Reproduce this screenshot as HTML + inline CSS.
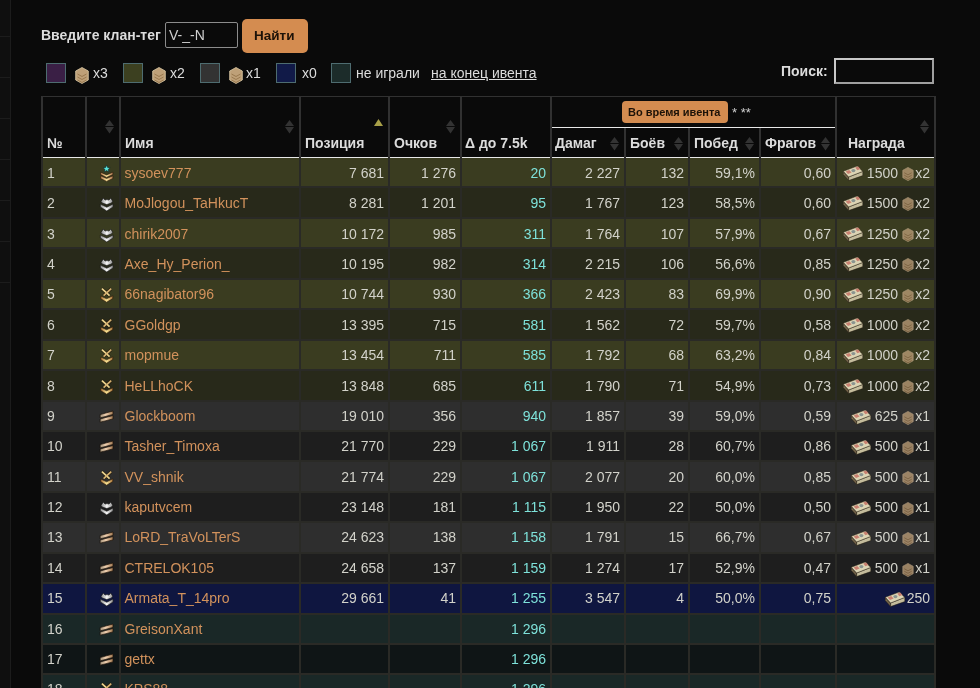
<!DOCTYPE html>
<html><head><meta charset="utf-8"><style>
html,body{margin:0;padding:0;}
body{width:980px;height:688px;overflow:hidden;will-change:transform;background:#0a0a0a;position:relative;font-family:"Liberation Sans",sans-serif;font-size:14px;color:#dcdcdc;}
.a{position:absolute;}
.t{position:absolute;white-space:nowrap;line-height:16px;height:16px;}
.r{text-align:right;}
.b{font-weight:bold;}
.ri{position:absolute;}
.sort{position:absolute;width:9px;height:14px;}
</style></head><body>

<div class="a" style="left:0;top:0;width:10px;height:688px;background:#0f0f0f;border-right:1px solid #1c1c1c"></div>
<div class="a" style="left:0;top:36px;width:10px;height:1px;background:#1c1c1c"></div>
<div class="a" style="left:0;top:77px;width:10px;height:1px;background:#1c1c1c"></div>
<div class="a" style="left:0;top:118px;width:10px;height:1px;background:#1c1c1c"></div>
<div class="a" style="left:0;top:159px;width:10px;height:1px;background:#1c1c1c"></div>
<div class="a" style="left:0;top:200px;width:10px;height:1px;background:#1c1c1c"></div>
<div class="a" style="left:0;top:241px;width:10px;height:1px;background:#1c1c1c"></div>
<div class="a" style="left:0;top:282px;width:10px;height:1px;background:#1c1c1c"></div>
<div class="t b" style="left:41px;top:27px;">Введите клан-тег</div>
<div class="a" style="left:165px;top:22px;width:71px;height:24px;border:1px solid #8c8c8c;border-radius:2px"></div>
<div class="t " style="left:169px;top:27px;color:#cfcfcf">V-_-N</div>
<div class="a" style="left:242px;top:19px;width:66px;height:34px;background:#d48c50;border-radius:5px"></div>
<div class="t b" style="left:254px;top:28px;font-size:13.5px;color:#1c1208">Найти</div>
<div class="a" style="left:46px;top:63px;width:18px;height:18px;background:#3a1f45;border:1px solid #4e6c70"></div>
<div class="a" style="left:123px;top:63px;width:18px;height:18px;background:#3c4020;border:1px solid #4e6c70"></div>
<div class="a" style="left:200px;top:63px;width:18px;height:18px;background:#333333;border:1px solid #4e6c70"></div>
<div class="a" style="left:276px;top:63px;width:18px;height:18px;background:#111a48;border:1px solid #4e6c70"></div>
<div class="a" style="left:331px;top:63px;width:18px;height:18px;background:#1c2c2a;border:1px solid #4e6c70"></div>
<div class="a" style="left:75px;top:67px;width:14px;height:17px"><svg width="14" height="17" viewBox="0 0 14 17"><path d="M7 0.5l6.3 3.5v9l-6.3 3.5-6.3-3.5v-9z" fill="#bea078" stroke="#dccaa6" stroke-width="0.8"/><path d="M2.5 7l4.5 2.5 4.5-2.5M2.5 10l4.5 2.5 4.5-2.5M2.5 13l4.5 2.5 4.5-2.5" fill="none" stroke="#98784e" stroke-width="1"/></svg></div>
<div class="a" style="left:152px;top:67px;width:14px;height:17px"><svg width="14" height="17" viewBox="0 0 14 17"><path d="M7 0.5l6.3 3.5v9l-6.3 3.5-6.3-3.5v-9z" fill="#bea078" stroke="#dccaa6" stroke-width="0.8"/><path d="M2.5 7l4.5 2.5 4.5-2.5M2.5 10l4.5 2.5 4.5-2.5M2.5 13l4.5 2.5 4.5-2.5" fill="none" stroke="#98784e" stroke-width="1"/></svg></div>
<div class="a" style="left:229px;top:67px;width:14px;height:17px"><svg width="14" height="17" viewBox="0 0 14 17"><path d="M7 0.5l6.3 3.5v9l-6.3 3.5-6.3-3.5v-9z" fill="#bea078" stroke="#dccaa6" stroke-width="0.8"/><path d="M2.5 7l4.5 2.5 4.5-2.5M2.5 10l4.5 2.5 4.5-2.5M2.5 13l4.5 2.5 4.5-2.5" fill="none" stroke="#98784e" stroke-width="1"/></svg></div>
<div class="t " style="left:93px;top:65px;">x3</div>
<div class="t " style="left:170px;top:65px;">x2</div>
<div class="t " style="left:246px;top:65px;">x1</div>
<div class="t " style="left:302px;top:65px;">x0</div>
<div class="t " style="left:356px;top:65px;">не играли</div>
<div class="t " style="left:431px;top:65px;text-decoration:underline">на конец ивента</div>
<div class="t b" style="left:781px;top:63px;">Поиск:</div>
<div class="a" style="left:834px;top:58px;width:96px;height:22px;border:2px solid #c8c8c8;border-right-color:#a0a0a0;border-bottom-color:#a0a0a0"></div>
<div class="a" style="left:41px;top:96px;width:895px;height:1px;background:#313131"></div>
<div class="a" style="left:552px;top:127px;width:283px;height:1px;background:#e8e8e8"></div>
<div class="a" style="left:43px;top:157px;width:891px;height:1px;background:#e8e8e8"></div>
<div class="a" style="left:41px;top:158px;width:895px;height:28px;background:#3a3c20"></div>
<div class="a" style="left:41px;top:186px;width:895px;height:2px;background:#2a2a26"></div>
<div class="t " style="left:47px;top:165px;color:#d2d2ca">1</div>
<div class="a" style="left:99px;top:158px;width:16px;height:28px"><svg width="16" height="28" viewBox="0 0 16 28"><defs><linearGradient id="gg" x1="0" x2="1"><stop offset="0" stop-color="#b07850"/><stop offset="0.5" stop-color="#f8e098"/><stop offset="1" stop-color="#b07850"/></linearGradient></defs><path d="M1.6,14.2 L7.6,16.9 L13.9,14.2 L13.9,16.6 L7.6,19.4 L1.6,16.6Z" fill="url(#gg)" stroke="#2a1a08" stroke-width="0.6"/><path d="M1.6,17.8 L7.6,20.5 L13.9,17.8 L13.9,20.5 L7.6,23.4 L1.6,20.5Z" fill="url(#gg)" stroke="#2a1a08" stroke-width="0.6"/><path d="M7.6,7.1 L8.7,9.5 L11.2,9.7 L9.3,11.4 L9.9,13.9 L7.6,12.6 L5.3,13.9 L5.9,11.4 L4,9.7 L6.5,9.5Z" fill="#58e0d8" stroke="#0c2020" stroke-width="0.6"/></svg></div>
<div class="t " style="left:124.5px;top:165px;color:#d2925c">sysoev777</div>
<div class="t r " style="right:596px;top:165px;color:#d2d2ca">7 681</div>
<div class="t r " style="right:524px;top:165px;color:#d2d2ca">1 276</div>
<div class="t r " style="right:434px;top:165px;color:#7ee2da">20</div>
<div class="t r " style="right:360px;top:165px;color:#d2d2ca">2 227</div>
<div class="t r " style="right:296px;top:165px;color:#d2d2ca">132</div>
<div class="t r " style="right:225px;top:165px;color:#d2d2ca">59,1%</div>
<div class="t r " style="right:149px;top:165px;color:#d2d2ca">0,60</div>
<div class="t r " style="right:50px;top:165px;color:#d2d2ca">x2</div>
<div class="a" style="left:902px;top:167px;width:12px;height:14px;opacity:0.8"><svg width="12" height="14" viewBox="0 0 14 17"><path d="M7 0.5l6.3 3.5v9l-6.3 3.5-6.3-3.5v-9z" fill="#b89a74" stroke="#c8b090" stroke-width="0.8"/><path d="M2.5 7l4.5 2.5 4.5-2.5M2.5 10l4.5 2.5 4.5-2.5M2.5 13l4.5 2.5 4.5-2.5" fill="none" stroke="#8c6c48" stroke-width="1"/></svg></div>
<div class="t r " style="right:82px;top:165px;color:#d2d2ca">1500</div>
<div class="a" style="left:843px;top:158px;width:21px;height:28px"><svg width="21" height="28" viewBox="0 0 21 28"><path d="M0.3,13.3 L5.6,19 L5.6,22.6 L0.3,16.6Z" fill="#8a7c60" stroke="#201a10" stroke-width="0.5"/><path d="M5.6,19 L19.8,13.4 L19.8,17.6 L5.6,22.6Z" fill="#c4bc9c" stroke="#201a10" stroke-width="0.5"/><path d="M0.3,13.3 L14.2,8 L19.8,13.4 L5.6,19Z" fill="#dcd4b4" stroke="#302818" stroke-width="0.5"/><path d="M1.2,15.2 L5.8,20.2 M1.2,16.6 L5.8,21.6" stroke="#40301c" stroke-width="0.5"/><path d="M2.6,13.4 L6.2,12 L8.6,14.6 L5,16.1Z" fill="#c88070"/><path d="M12.2,9.6 L15.2,8.5 L17.4,11 L14.4,12.2Z" fill="#c88070"/><ellipse cx="10.4" cy="12.6" rx="2" ry="1.6" fill="#8a9490"/></svg></div>
<div class="a" style="left:41px;top:188px;width:895px;height:29px;background:#28291a"></div>
<div class="a" style="left:41px;top:217px;width:895px;height:2px;background:#2a2a26"></div>
<div class="t " style="left:47px;top:195px;color:#d2d2ca">2</div>
<div class="a" style="left:99px;top:188px;width:16px;height:28px"><svg width="16" height="28" viewBox="0 -0.7 16 28"><defs><linearGradient id="sg" x1="0" x2="1"><stop offset="0" stop-color="#8c8c8c"/><stop offset="0.5" stop-color="#f8f8f8"/><stop offset="1" stop-color="#8c8c8c"/></linearGradient></defs><path d="M4.3,9.3 L6,11.4 L8,10.9 L10,11.4 L11.7,9.3 L13.8,12.5 L12.5,14.3 L7.8,15.8 L3.2,14.3 L2,12.7Z" fill="url(#sg)" stroke="#101010" stroke-width="0.6"/><path d="M1.3,15.4 L7.8,18.6 L14.1,15.2 L14.1,18.2 L7.8,22.3 L1.3,18.2Z" fill="url(#sg)" stroke="#101010" stroke-width="0.6"/></svg></div>
<div class="t " style="left:124.5px;top:195px;color:#d2925c">MoJlogou_TaHkucT</div>
<div class="t r " style="right:596px;top:195px;color:#d2d2ca">8 281</div>
<div class="t r " style="right:524px;top:195px;color:#d2d2ca">1 201</div>
<div class="t r " style="right:434px;top:195px;color:#7ee2da">95</div>
<div class="t r " style="right:360px;top:195px;color:#d2d2ca">1 767</div>
<div class="t r " style="right:296px;top:195px;color:#d2d2ca">123</div>
<div class="t r " style="right:225px;top:195px;color:#d2d2ca">58,5%</div>
<div class="t r " style="right:149px;top:195px;color:#d2d2ca">0,60</div>
<div class="t r " style="right:50px;top:195px;color:#d2d2ca">x2</div>
<div class="a" style="left:902px;top:197px;width:12px;height:14px;opacity:0.8"><svg width="12" height="14" viewBox="0 0 14 17"><path d="M7 0.5l6.3 3.5v9l-6.3 3.5-6.3-3.5v-9z" fill="#b89a74" stroke="#c8b090" stroke-width="0.8"/><path d="M2.5 7l4.5 2.5 4.5-2.5M2.5 10l4.5 2.5 4.5-2.5M2.5 13l4.5 2.5 4.5-2.5" fill="none" stroke="#8c6c48" stroke-width="1"/></svg></div>
<div class="t r " style="right:82px;top:195px;color:#d2d2ca">1500</div>
<div class="a" style="left:843px;top:188px;width:21px;height:28px"><svg width="21" height="28" viewBox="0 0 21 28"><path d="M0.3,13.3 L5.6,19 L5.6,22.6 L0.3,16.6Z" fill="#8a7c60" stroke="#201a10" stroke-width="0.5"/><path d="M5.6,19 L19.8,13.4 L19.8,17.6 L5.6,22.6Z" fill="#c4bc9c" stroke="#201a10" stroke-width="0.5"/><path d="M0.3,13.3 L14.2,8 L19.8,13.4 L5.6,19Z" fill="#dcd4b4" stroke="#302818" stroke-width="0.5"/><path d="M1.2,15.2 L5.8,20.2 M1.2,16.6 L5.8,21.6" stroke="#40301c" stroke-width="0.5"/><path d="M2.6,13.4 L6.2,12 L8.6,14.6 L5,16.1Z" fill="#c88070"/><path d="M12.2,9.6 L15.2,8.5 L17.4,11 L14.4,12.2Z" fill="#c88070"/><ellipse cx="10.4" cy="12.6" rx="2" ry="1.6" fill="#8a9490"/></svg></div>
<div class="a" style="left:41px;top:219px;width:895px;height:28px;background:#3a3c20"></div>
<div class="a" style="left:41px;top:247px;width:895px;height:2px;background:#2a2a26"></div>
<div class="t " style="left:47px;top:226px;color:#d2d2ca">3</div>
<div class="a" style="left:99px;top:219px;width:16px;height:28px"><svg width="16" height="28" viewBox="0 -0.7 16 28"><defs><linearGradient id="sg" x1="0" x2="1"><stop offset="0" stop-color="#8c8c8c"/><stop offset="0.5" stop-color="#f8f8f8"/><stop offset="1" stop-color="#8c8c8c"/></linearGradient></defs><path d="M4.3,9.3 L6,11.4 L8,10.9 L10,11.4 L11.7,9.3 L13.8,12.5 L12.5,14.3 L7.8,15.8 L3.2,14.3 L2,12.7Z" fill="url(#sg)" stroke="#101010" stroke-width="0.6"/><path d="M1.3,15.4 L7.8,18.6 L14.1,15.2 L14.1,18.2 L7.8,22.3 L1.3,18.2Z" fill="url(#sg)" stroke="#101010" stroke-width="0.6"/></svg></div>
<div class="t " style="left:124.5px;top:226px;color:#d2925c">chirik2007</div>
<div class="t r " style="right:596px;top:226px;color:#d2d2ca">10 172</div>
<div class="t r " style="right:524px;top:226px;color:#d2d2ca">985</div>
<div class="t r " style="right:434px;top:226px;color:#7ee2da">311</div>
<div class="t r " style="right:360px;top:226px;color:#d2d2ca">1 764</div>
<div class="t r " style="right:296px;top:226px;color:#d2d2ca">107</div>
<div class="t r " style="right:225px;top:226px;color:#d2d2ca">57,9%</div>
<div class="t r " style="right:149px;top:226px;color:#d2d2ca">0,67</div>
<div class="t r " style="right:50px;top:226px;color:#d2d2ca">x2</div>
<div class="a" style="left:902px;top:228px;width:12px;height:14px;opacity:0.8"><svg width="12" height="14" viewBox="0 0 14 17"><path d="M7 0.5l6.3 3.5v9l-6.3 3.5-6.3-3.5v-9z" fill="#b89a74" stroke="#c8b090" stroke-width="0.8"/><path d="M2.5 7l4.5 2.5 4.5-2.5M2.5 10l4.5 2.5 4.5-2.5M2.5 13l4.5 2.5 4.5-2.5" fill="none" stroke="#8c6c48" stroke-width="1"/></svg></div>
<div class="t r " style="right:82px;top:226px;color:#d2d2ca">1250</div>
<div class="a" style="left:843px;top:219px;width:21px;height:28px"><svg width="21" height="28" viewBox="0 0 21 28"><path d="M0.3,13.3 L5.6,19 L5.6,22.6 L0.3,16.6Z" fill="#8a7c60" stroke="#201a10" stroke-width="0.5"/><path d="M5.6,19 L19.8,13.4 L19.8,17.6 L5.6,22.6Z" fill="#c4bc9c" stroke="#201a10" stroke-width="0.5"/><path d="M0.3,13.3 L14.2,8 L19.8,13.4 L5.6,19Z" fill="#dcd4b4" stroke="#302818" stroke-width="0.5"/><path d="M1.2,15.2 L5.8,20.2 M1.2,16.6 L5.8,21.6" stroke="#40301c" stroke-width="0.5"/><path d="M2.6,13.4 L6.2,12 L8.6,14.6 L5,16.1Z" fill="#c88070"/><path d="M12.2,9.6 L15.2,8.5 L17.4,11 L14.4,12.2Z" fill="#c88070"/><ellipse cx="10.4" cy="12.6" rx="2" ry="1.6" fill="#8a9490"/></svg></div>
<div class="a" style="left:41px;top:249px;width:895px;height:29px;background:#28291a"></div>
<div class="a" style="left:41px;top:278px;width:895px;height:2px;background:#2a2a26"></div>
<div class="t " style="left:47px;top:256px;color:#d2d2ca">4</div>
<div class="a" style="left:99px;top:249px;width:16px;height:28px"><svg width="16" height="28" viewBox="0 -0.7 16 28"><defs><linearGradient id="sg" x1="0" x2="1"><stop offset="0" stop-color="#8c8c8c"/><stop offset="0.5" stop-color="#f8f8f8"/><stop offset="1" stop-color="#8c8c8c"/></linearGradient></defs><path d="M4.3,9.3 L6,11.4 L8,10.9 L10,11.4 L11.7,9.3 L13.8,12.5 L12.5,14.3 L7.8,15.8 L3.2,14.3 L2,12.7Z" fill="url(#sg)" stroke="#101010" stroke-width="0.6"/><path d="M1.3,15.4 L7.8,18.6 L14.1,15.2 L14.1,18.2 L7.8,22.3 L1.3,18.2Z" fill="url(#sg)" stroke="#101010" stroke-width="0.6"/></svg></div>
<div class="t " style="left:124.5px;top:256px;color:#d2925c">Axe_Hy_Perion_</div>
<div class="t r " style="right:596px;top:256px;color:#d2d2ca">10 195</div>
<div class="t r " style="right:524px;top:256px;color:#d2d2ca">982</div>
<div class="t r " style="right:434px;top:256px;color:#7ee2da">314</div>
<div class="t r " style="right:360px;top:256px;color:#d2d2ca">2 215</div>
<div class="t r " style="right:296px;top:256px;color:#d2d2ca">106</div>
<div class="t r " style="right:225px;top:256px;color:#d2d2ca">56,6%</div>
<div class="t r " style="right:149px;top:256px;color:#d2d2ca">0,85</div>
<div class="t r " style="right:50px;top:256px;color:#d2d2ca">x2</div>
<div class="a" style="left:902px;top:258px;width:12px;height:14px;opacity:0.8"><svg width="12" height="14" viewBox="0 0 14 17"><path d="M7 0.5l6.3 3.5v9l-6.3 3.5-6.3-3.5v-9z" fill="#b89a74" stroke="#c8b090" stroke-width="0.8"/><path d="M2.5 7l4.5 2.5 4.5-2.5M2.5 10l4.5 2.5 4.5-2.5M2.5 13l4.5 2.5 4.5-2.5" fill="none" stroke="#8c6c48" stroke-width="1"/></svg></div>
<div class="t r " style="right:82px;top:256px;color:#d2d2ca">1250</div>
<div class="a" style="left:843px;top:249px;width:21px;height:28px"><svg width="21" height="28" viewBox="0 0 21 28"><path d="M0.3,13.3 L5.6,19 L5.6,22.6 L0.3,16.6Z" fill="#8a7c60" stroke="#201a10" stroke-width="0.5"/><path d="M5.6,19 L19.8,13.4 L19.8,17.6 L5.6,22.6Z" fill="#c4bc9c" stroke="#201a10" stroke-width="0.5"/><path d="M0.3,13.3 L14.2,8 L19.8,13.4 L5.6,19Z" fill="#dcd4b4" stroke="#302818" stroke-width="0.5"/><path d="M1.2,15.2 L5.8,20.2 M1.2,16.6 L5.8,21.6" stroke="#40301c" stroke-width="0.5"/><path d="M2.6,13.4 L6.2,12 L8.6,14.6 L5,16.1Z" fill="#c88070"/><path d="M12.2,9.6 L15.2,8.5 L17.4,11 L14.4,12.2Z" fill="#c88070"/><ellipse cx="10.4" cy="12.6" rx="2" ry="1.6" fill="#8a9490"/></svg></div>
<div class="a" style="left:41px;top:280px;width:895px;height:28px;background:#3a3c20"></div>
<div class="a" style="left:41px;top:308px;width:895px;height:2px;background:#2a2a26"></div>
<div class="t " style="left:47px;top:286px;color:#d2d2ca">5</div>
<div class="a" style="left:99px;top:279px;width:16px;height:28px"><svg width="16" height="28" viewBox="0 -1 16 28"><defs><linearGradient id="og" x1="0" x2="1"><stop offset="0" stop-color="#a87038"/><stop offset="0.5" stop-color="#fae494"/><stop offset="1" stop-color="#a87038"/></linearGradient></defs><path d="M2.9,8.6 L10.6,15.6 M12.2,8.6 L4.6,15.6" stroke="#20180a" stroke-width="3"/><path d="M2.9,8.6 L10.6,15.6" stroke="#ecd48e" stroke-width="1.8"/><path d="M12.2,8.6 L4.6,15.6" stroke="#d4b070" stroke-width="1.8"/><path d="M1.8,16 L7.6,18.8 L13.8,15.8 L13.8,18.6 L7.6,22.2 L1.8,18.8Z" fill="url(#og)" stroke="#2a1a08" stroke-width="0.6"/></svg></div>
<div class="t " style="left:124.5px;top:286px;color:#d2925c">66nagibator96</div>
<div class="t r " style="right:596px;top:286px;color:#d2d2ca">10 744</div>
<div class="t r " style="right:524px;top:286px;color:#d2d2ca">930</div>
<div class="t r " style="right:434px;top:286px;color:#7ee2da">366</div>
<div class="t r " style="right:360px;top:286px;color:#d2d2ca">2 423</div>
<div class="t r " style="right:296px;top:286px;color:#d2d2ca">83</div>
<div class="t r " style="right:225px;top:286px;color:#d2d2ca">69,9%</div>
<div class="t r " style="right:149px;top:286px;color:#d2d2ca">0,90</div>
<div class="t r " style="right:50px;top:286px;color:#d2d2ca">x2</div>
<div class="a" style="left:902px;top:289px;width:12px;height:14px;opacity:0.8"><svg width="12" height="14" viewBox="0 0 14 17"><path d="M7 0.5l6.3 3.5v9l-6.3 3.5-6.3-3.5v-9z" fill="#b89a74" stroke="#c8b090" stroke-width="0.8"/><path d="M2.5 7l4.5 2.5 4.5-2.5M2.5 10l4.5 2.5 4.5-2.5M2.5 13l4.5 2.5 4.5-2.5" fill="none" stroke="#8c6c48" stroke-width="1"/></svg></div>
<div class="t r " style="right:82px;top:286px;color:#d2d2ca">1250</div>
<div class="a" style="left:843px;top:280px;width:21px;height:28px"><svg width="21" height="28" viewBox="0 0 21 28"><path d="M0.3,13.3 L5.6,19 L5.6,22.6 L0.3,16.6Z" fill="#8a7c60" stroke="#201a10" stroke-width="0.5"/><path d="M5.6,19 L19.8,13.4 L19.8,17.6 L5.6,22.6Z" fill="#c4bc9c" stroke="#201a10" stroke-width="0.5"/><path d="M0.3,13.3 L14.2,8 L19.8,13.4 L5.6,19Z" fill="#dcd4b4" stroke="#302818" stroke-width="0.5"/><path d="M1.2,15.2 L5.8,20.2 M1.2,16.6 L5.8,21.6" stroke="#40301c" stroke-width="0.5"/><path d="M2.6,13.4 L6.2,12 L8.6,14.6 L5,16.1Z" fill="#c88070"/><path d="M12.2,9.6 L15.2,8.5 L17.4,11 L14.4,12.2Z" fill="#c88070"/><ellipse cx="10.4" cy="12.6" rx="2" ry="1.6" fill="#8a9490"/></svg></div>
<div class="a" style="left:41px;top:310px;width:895px;height:29px;background:#28291a"></div>
<div class="a" style="left:41px;top:339px;width:895px;height:2px;background:#2a2a26"></div>
<div class="t " style="left:47px;top:317px;color:#d2d2ca">6</div>
<div class="a" style="left:99px;top:310px;width:16px;height:28px"><svg width="16" height="28" viewBox="0 -1 16 28"><defs><linearGradient id="og" x1="0" x2="1"><stop offset="0" stop-color="#a87038"/><stop offset="0.5" stop-color="#fae494"/><stop offset="1" stop-color="#a87038"/></linearGradient></defs><path d="M2.9,8.6 L10.6,15.6 M12.2,8.6 L4.6,15.6" stroke="#20180a" stroke-width="3"/><path d="M2.9,8.6 L10.6,15.6" stroke="#ecd48e" stroke-width="1.8"/><path d="M12.2,8.6 L4.6,15.6" stroke="#d4b070" stroke-width="1.8"/><path d="M1.8,16 L7.6,18.8 L13.8,15.8 L13.8,18.6 L7.6,22.2 L1.8,18.8Z" fill="url(#og)" stroke="#2a1a08" stroke-width="0.6"/></svg></div>
<div class="t " style="left:124.5px;top:317px;color:#d2925c">GGoldgp</div>
<div class="t r " style="right:596px;top:317px;color:#d2d2ca">13 395</div>
<div class="t r " style="right:524px;top:317px;color:#d2d2ca">715</div>
<div class="t r " style="right:434px;top:317px;color:#7ee2da">581</div>
<div class="t r " style="right:360px;top:317px;color:#d2d2ca">1 562</div>
<div class="t r " style="right:296px;top:317px;color:#d2d2ca">72</div>
<div class="t r " style="right:225px;top:317px;color:#d2d2ca">59,7%</div>
<div class="t r " style="right:149px;top:317px;color:#d2d2ca">0,58</div>
<div class="t r " style="right:50px;top:317px;color:#d2d2ca">x2</div>
<div class="a" style="left:902px;top:319px;width:12px;height:14px;opacity:0.8"><svg width="12" height="14" viewBox="0 0 14 17"><path d="M7 0.5l6.3 3.5v9l-6.3 3.5-6.3-3.5v-9z" fill="#b89a74" stroke="#c8b090" stroke-width="0.8"/><path d="M2.5 7l4.5 2.5 4.5-2.5M2.5 10l4.5 2.5 4.5-2.5M2.5 13l4.5 2.5 4.5-2.5" fill="none" stroke="#8c6c48" stroke-width="1"/></svg></div>
<div class="t r " style="right:82px;top:317px;color:#d2d2ca">1000</div>
<div class="a" style="left:843px;top:310px;width:21px;height:28px"><svg width="21" height="28" viewBox="0 0 21 28"><path d="M0.3,13.3 L5.6,19 L5.6,22.6 L0.3,16.6Z" fill="#8a7c60" stroke="#201a10" stroke-width="0.5"/><path d="M5.6,19 L19.8,13.4 L19.8,17.6 L5.6,22.6Z" fill="#c4bc9c" stroke="#201a10" stroke-width="0.5"/><path d="M0.3,13.3 L14.2,8 L19.8,13.4 L5.6,19Z" fill="#dcd4b4" stroke="#302818" stroke-width="0.5"/><path d="M1.2,15.2 L5.8,20.2 M1.2,16.6 L5.8,21.6" stroke="#40301c" stroke-width="0.5"/><path d="M2.6,13.4 L6.2,12 L8.6,14.6 L5,16.1Z" fill="#c88070"/><path d="M12.2,9.6 L15.2,8.5 L17.4,11 L14.4,12.2Z" fill="#c88070"/><ellipse cx="10.4" cy="12.6" rx="2" ry="1.6" fill="#8a9490"/></svg></div>
<div class="a" style="left:41px;top:341px;width:895px;height:28px;background:#3a3c20"></div>
<div class="a" style="left:41px;top:369px;width:895px;height:2px;background:#2a2a26"></div>
<div class="t " style="left:47px;top:347px;color:#d2d2ca">7</div>
<div class="a" style="left:99px;top:340px;width:16px;height:28px"><svg width="16" height="28" viewBox="0 -1 16 28"><defs><linearGradient id="og" x1="0" x2="1"><stop offset="0" stop-color="#a87038"/><stop offset="0.5" stop-color="#fae494"/><stop offset="1" stop-color="#a87038"/></linearGradient></defs><path d="M2.9,8.6 L10.6,15.6 M12.2,8.6 L4.6,15.6" stroke="#20180a" stroke-width="3"/><path d="M2.9,8.6 L10.6,15.6" stroke="#ecd48e" stroke-width="1.8"/><path d="M12.2,8.6 L4.6,15.6" stroke="#d4b070" stroke-width="1.8"/><path d="M1.8,16 L7.6,18.8 L13.8,15.8 L13.8,18.6 L7.6,22.2 L1.8,18.8Z" fill="url(#og)" stroke="#2a1a08" stroke-width="0.6"/></svg></div>
<div class="t " style="left:124.5px;top:347px;color:#d2925c">mopmue</div>
<div class="t r " style="right:596px;top:347px;color:#d2d2ca">13 454</div>
<div class="t r " style="right:524px;top:347px;color:#d2d2ca">711</div>
<div class="t r " style="right:434px;top:347px;color:#7ee2da">585</div>
<div class="t r " style="right:360px;top:347px;color:#d2d2ca">1 792</div>
<div class="t r " style="right:296px;top:347px;color:#d2d2ca">68</div>
<div class="t r " style="right:225px;top:347px;color:#d2d2ca">63,2%</div>
<div class="t r " style="right:149px;top:347px;color:#d2d2ca">0,84</div>
<div class="t r " style="right:50px;top:347px;color:#d2d2ca">x2</div>
<div class="a" style="left:902px;top:350px;width:12px;height:14px;opacity:0.8"><svg width="12" height="14" viewBox="0 0 14 17"><path d="M7 0.5l6.3 3.5v9l-6.3 3.5-6.3-3.5v-9z" fill="#b89a74" stroke="#c8b090" stroke-width="0.8"/><path d="M2.5 7l4.5 2.5 4.5-2.5M2.5 10l4.5 2.5 4.5-2.5M2.5 13l4.5 2.5 4.5-2.5" fill="none" stroke="#8c6c48" stroke-width="1"/></svg></div>
<div class="t r " style="right:82px;top:347px;color:#d2d2ca">1000</div>
<div class="a" style="left:843px;top:341px;width:21px;height:28px"><svg width="21" height="28" viewBox="0 0 21 28"><path d="M0.3,13.3 L5.6,19 L5.6,22.6 L0.3,16.6Z" fill="#8a7c60" stroke="#201a10" stroke-width="0.5"/><path d="M5.6,19 L19.8,13.4 L19.8,17.6 L5.6,22.6Z" fill="#c4bc9c" stroke="#201a10" stroke-width="0.5"/><path d="M0.3,13.3 L14.2,8 L19.8,13.4 L5.6,19Z" fill="#dcd4b4" stroke="#302818" stroke-width="0.5"/><path d="M1.2,15.2 L5.8,20.2 M1.2,16.6 L5.8,21.6" stroke="#40301c" stroke-width="0.5"/><path d="M2.6,13.4 L6.2,12 L8.6,14.6 L5,16.1Z" fill="#c88070"/><path d="M12.2,9.6 L15.2,8.5 L17.4,11 L14.4,12.2Z" fill="#c88070"/><ellipse cx="10.4" cy="12.6" rx="2" ry="1.6" fill="#8a9490"/></svg></div>
<div class="a" style="left:41px;top:371px;width:895px;height:29px;background:#28291a"></div>
<div class="a" style="left:41px;top:400px;width:895px;height:2px;background:#2a2a26"></div>
<div class="t " style="left:47px;top:378px;color:#d2d2ca">8</div>
<div class="a" style="left:99px;top:371px;width:16px;height:28px"><svg width="16" height="28" viewBox="0 -1 16 28"><defs><linearGradient id="og" x1="0" x2="1"><stop offset="0" stop-color="#a87038"/><stop offset="0.5" stop-color="#fae494"/><stop offset="1" stop-color="#a87038"/></linearGradient></defs><path d="M2.9,8.6 L10.6,15.6 M12.2,8.6 L4.6,15.6" stroke="#20180a" stroke-width="3"/><path d="M2.9,8.6 L10.6,15.6" stroke="#ecd48e" stroke-width="1.8"/><path d="M12.2,8.6 L4.6,15.6" stroke="#d4b070" stroke-width="1.8"/><path d="M1.8,16 L7.6,18.8 L13.8,15.8 L13.8,18.6 L7.6,22.2 L1.8,18.8Z" fill="url(#og)" stroke="#2a1a08" stroke-width="0.6"/></svg></div>
<div class="t " style="left:124.5px;top:378px;color:#d2925c">HeLLhoCK</div>
<div class="t r " style="right:596px;top:378px;color:#d2d2ca">13 848</div>
<div class="t r " style="right:524px;top:378px;color:#d2d2ca">685</div>
<div class="t r " style="right:434px;top:378px;color:#7ee2da">611</div>
<div class="t r " style="right:360px;top:378px;color:#d2d2ca">1 790</div>
<div class="t r " style="right:296px;top:378px;color:#d2d2ca">71</div>
<div class="t r " style="right:225px;top:378px;color:#d2d2ca">54,9%</div>
<div class="t r " style="right:149px;top:378px;color:#d2d2ca">0,73</div>
<div class="t r " style="right:50px;top:378px;color:#d2d2ca">x2</div>
<div class="a" style="left:902px;top:380px;width:12px;height:14px;opacity:0.8"><svg width="12" height="14" viewBox="0 0 14 17"><path d="M7 0.5l6.3 3.5v9l-6.3 3.5-6.3-3.5v-9z" fill="#b89a74" stroke="#c8b090" stroke-width="0.8"/><path d="M2.5 7l4.5 2.5 4.5-2.5M2.5 10l4.5 2.5 4.5-2.5M2.5 13l4.5 2.5 4.5-2.5" fill="none" stroke="#8c6c48" stroke-width="1"/></svg></div>
<div class="t r " style="right:82px;top:378px;color:#d2d2ca">1000</div>
<div class="a" style="left:843px;top:371px;width:21px;height:28px"><svg width="21" height="28" viewBox="0 0 21 28"><path d="M0.3,13.3 L5.6,19 L5.6,22.6 L0.3,16.6Z" fill="#8a7c60" stroke="#201a10" stroke-width="0.5"/><path d="M5.6,19 L19.8,13.4 L19.8,17.6 L5.6,22.6Z" fill="#c4bc9c" stroke="#201a10" stroke-width="0.5"/><path d="M0.3,13.3 L14.2,8 L19.8,13.4 L5.6,19Z" fill="#dcd4b4" stroke="#302818" stroke-width="0.5"/><path d="M1.2,15.2 L5.8,20.2 M1.2,16.6 L5.8,21.6" stroke="#40301c" stroke-width="0.5"/><path d="M2.6,13.4 L6.2,12 L8.6,14.6 L5,16.1Z" fill="#c88070"/><path d="M12.2,9.6 L15.2,8.5 L17.4,11 L14.4,12.2Z" fill="#c88070"/><ellipse cx="10.4" cy="12.6" rx="2" ry="1.6" fill="#8a9490"/></svg></div>
<div class="a" style="left:41px;top:402px;width:895px;height:28px;background:#2e2e2e"></div>
<div class="a" style="left:41px;top:430px;width:895px;height:2px;background:#2a2a26"></div>
<div class="t " style="left:47px;top:408px;color:#d2d2ca">9</div>
<div class="a" style="left:99px;top:401px;width:16px;height:28px"><svg width="16" height="28" viewBox="0 0 16 28"><defs><linearGradient id="bg" x1="0" x2="1"><stop offset="0" stop-color="#a09078"/><stop offset="0.45" stop-color="#f0d0b0"/><stop offset="1" stop-color="#a07850"/></linearGradient></defs><path d="M1.1,13.6 L14,10 L14,13.4 L1.1,16.9Z" fill="url(#bg)" stroke="#181008" stroke-width="0.7"/><path d="M1.1,18 L14,14.5 L14,17.9 L1.1,21.2Z" fill="url(#bg)" stroke="#181008" stroke-width="0.7"/></svg></div>
<div class="t " style="left:124.5px;top:408px;color:#d2925c">Glockboom</div>
<div class="t r " style="right:596px;top:408px;color:#d2d2ca">19 010</div>
<div class="t r " style="right:524px;top:408px;color:#d2d2ca">356</div>
<div class="t r " style="right:434px;top:408px;color:#7ee2da">940</div>
<div class="t r " style="right:360px;top:408px;color:#d2d2ca">1 857</div>
<div class="t r " style="right:296px;top:408px;color:#d2d2ca">39</div>
<div class="t r " style="right:225px;top:408px;color:#d2d2ca">59,0%</div>
<div class="t r " style="right:149px;top:408px;color:#d2d2ca">0,59</div>
<div class="t r " style="right:50px;top:408px;color:#d2d2ca">x1</div>
<div class="a" style="left:902px;top:411px;width:12px;height:14px;opacity:0.8"><svg width="12" height="14" viewBox="0 0 14 17"><path d="M7 0.5l6.3 3.5v9l-6.3 3.5-6.3-3.5v-9z" fill="#b89a74" stroke="#c8b090" stroke-width="0.8"/><path d="M2.5 7l4.5 2.5 4.5-2.5M2.5 10l4.5 2.5 4.5-2.5M2.5 13l4.5 2.5 4.5-2.5" fill="none" stroke="#8c6c48" stroke-width="1"/></svg></div>
<div class="t r " style="right:82px;top:408px;color:#d2d2ca">625</div>
<div class="a" style="left:851px;top:402px;width:21px;height:28px"><svg width="21" height="28" viewBox="0 0 21 28"><path d="M0.3,13.3 L5.6,19 L5.6,22.6 L0.3,16.6Z" fill="#8a7c60" stroke="#201a10" stroke-width="0.5"/><path d="M5.6,19 L19.8,13.4 L19.8,17.6 L5.6,22.6Z" fill="#c4bc9c" stroke="#201a10" stroke-width="0.5"/><path d="M0.3,13.3 L14.2,8 L19.8,13.4 L5.6,19Z" fill="#dcd4b4" stroke="#302818" stroke-width="0.5"/><path d="M1.2,15.2 L5.8,20.2 M1.2,16.6 L5.8,21.6" stroke="#40301c" stroke-width="0.5"/><path d="M2.6,13.4 L6.2,12 L8.6,14.6 L5,16.1Z" fill="#c88070"/><path d="M12.2,9.6 L15.2,8.5 L17.4,11 L14.4,12.2Z" fill="#c88070"/><ellipse cx="10.4" cy="12.6" rx="2" ry="1.6" fill="#8a9490"/></svg></div>
<div class="a" style="left:41px;top:432px;width:895px;height:28px;background:#1e1e1e"></div>
<div class="a" style="left:41px;top:460px;width:895px;height:2px;background:#2a2a26"></div>
<div class="t " style="left:47px;top:438px;color:#d2d2ca">10</div>
<div class="a" style="left:99px;top:431px;width:16px;height:28px"><svg width="16" height="28" viewBox="0 0 16 28"><defs><linearGradient id="bg" x1="0" x2="1"><stop offset="0" stop-color="#a09078"/><stop offset="0.45" stop-color="#f0d0b0"/><stop offset="1" stop-color="#a07850"/></linearGradient></defs><path d="M1.1,13.6 L14,10 L14,13.4 L1.1,16.9Z" fill="url(#bg)" stroke="#181008" stroke-width="0.7"/><path d="M1.1,18 L14,14.5 L14,17.9 L1.1,21.2Z" fill="url(#bg)" stroke="#181008" stroke-width="0.7"/></svg></div>
<div class="t " style="left:124.5px;top:438px;color:#d2925c">Tasher_Timoxa</div>
<div class="t r " style="right:596px;top:438px;color:#d2d2ca">21 770</div>
<div class="t r " style="right:524px;top:438px;color:#d2d2ca">229</div>
<div class="t r " style="right:434px;top:438px;color:#7ee2da">1 067</div>
<div class="t r " style="right:360px;top:438px;color:#d2d2ca">1 911</div>
<div class="t r " style="right:296px;top:438px;color:#d2d2ca">28</div>
<div class="t r " style="right:225px;top:438px;color:#d2d2ca">60,7%</div>
<div class="t r " style="right:149px;top:438px;color:#d2d2ca">0,86</div>
<div class="t r " style="right:50px;top:438px;color:#d2d2ca">x1</div>
<div class="a" style="left:902px;top:441px;width:12px;height:14px;opacity:0.8"><svg width="12" height="14" viewBox="0 0 14 17"><path d="M7 0.5l6.3 3.5v9l-6.3 3.5-6.3-3.5v-9z" fill="#b89a74" stroke="#c8b090" stroke-width="0.8"/><path d="M2.5 7l4.5 2.5 4.5-2.5M2.5 10l4.5 2.5 4.5-2.5M2.5 13l4.5 2.5 4.5-2.5" fill="none" stroke="#8c6c48" stroke-width="1"/></svg></div>
<div class="t r " style="right:82px;top:438px;color:#d2d2ca">500</div>
<div class="a" style="left:851px;top:432px;width:21px;height:28px"><svg width="21" height="28" viewBox="0 0 21 28"><path d="M0.3,13.3 L5.6,19 L5.6,22.6 L0.3,16.6Z" fill="#8a7c60" stroke="#201a10" stroke-width="0.5"/><path d="M5.6,19 L19.8,13.4 L19.8,17.6 L5.6,22.6Z" fill="#c4bc9c" stroke="#201a10" stroke-width="0.5"/><path d="M0.3,13.3 L14.2,8 L19.8,13.4 L5.6,19Z" fill="#dcd4b4" stroke="#302818" stroke-width="0.5"/><path d="M1.2,15.2 L5.8,20.2 M1.2,16.6 L5.8,21.6" stroke="#40301c" stroke-width="0.5"/><path d="M2.6,13.4 L6.2,12 L8.6,14.6 L5,16.1Z" fill="#c88070"/><path d="M12.2,9.6 L15.2,8.5 L17.4,11 L14.4,12.2Z" fill="#c88070"/><ellipse cx="10.4" cy="12.6" rx="2" ry="1.6" fill="#8a9490"/></svg></div>
<div class="a" style="left:41px;top:462px;width:895px;height:29px;background:#2e2e2e"></div>
<div class="a" style="left:41px;top:491px;width:895px;height:2px;background:#2a2a26"></div>
<div class="t " style="left:47px;top:469px;color:#d2d2ca">11</div>
<div class="a" style="left:99px;top:462px;width:16px;height:28px"><svg width="16" height="28" viewBox="0 -1 16 28"><defs><linearGradient id="og" x1="0" x2="1"><stop offset="0" stop-color="#a87038"/><stop offset="0.5" stop-color="#fae494"/><stop offset="1" stop-color="#a87038"/></linearGradient></defs><path d="M2.9,8.6 L10.6,15.6 M12.2,8.6 L4.6,15.6" stroke="#20180a" stroke-width="3"/><path d="M2.9,8.6 L10.6,15.6" stroke="#ecd48e" stroke-width="1.8"/><path d="M12.2,8.6 L4.6,15.6" stroke="#d4b070" stroke-width="1.8"/><path d="M1.8,16 L7.6,18.8 L13.8,15.8 L13.8,18.6 L7.6,22.2 L1.8,18.8Z" fill="url(#og)" stroke="#2a1a08" stroke-width="0.6"/></svg></div>
<div class="t " style="left:124.5px;top:469px;color:#d2925c">VV_shnik</div>
<div class="t r " style="right:596px;top:469px;color:#d2d2ca">21 774</div>
<div class="t r " style="right:524px;top:469px;color:#d2d2ca">229</div>
<div class="t r " style="right:434px;top:469px;color:#7ee2da">1 067</div>
<div class="t r " style="right:360px;top:469px;color:#d2d2ca">2 077</div>
<div class="t r " style="right:296px;top:469px;color:#d2d2ca">20</div>
<div class="t r " style="right:225px;top:469px;color:#d2d2ca">60,0%</div>
<div class="t r " style="right:149px;top:469px;color:#d2d2ca">0,85</div>
<div class="t r " style="right:50px;top:469px;color:#d2d2ca">x1</div>
<div class="a" style="left:902px;top:471px;width:12px;height:14px;opacity:0.8"><svg width="12" height="14" viewBox="0 0 14 17"><path d="M7 0.5l6.3 3.5v9l-6.3 3.5-6.3-3.5v-9z" fill="#b89a74" stroke="#c8b090" stroke-width="0.8"/><path d="M2.5 7l4.5 2.5 4.5-2.5M2.5 10l4.5 2.5 4.5-2.5M2.5 13l4.5 2.5 4.5-2.5" fill="none" stroke="#8c6c48" stroke-width="1"/></svg></div>
<div class="t r " style="right:82px;top:469px;color:#d2d2ca">500</div>
<div class="a" style="left:851px;top:462px;width:21px;height:28px"><svg width="21" height="28" viewBox="0 0 21 28"><path d="M0.3,13.3 L5.6,19 L5.6,22.6 L0.3,16.6Z" fill="#8a7c60" stroke="#201a10" stroke-width="0.5"/><path d="M5.6,19 L19.8,13.4 L19.8,17.6 L5.6,22.6Z" fill="#c4bc9c" stroke="#201a10" stroke-width="0.5"/><path d="M0.3,13.3 L14.2,8 L19.8,13.4 L5.6,19Z" fill="#dcd4b4" stroke="#302818" stroke-width="0.5"/><path d="M1.2,15.2 L5.8,20.2 M1.2,16.6 L5.8,21.6" stroke="#40301c" stroke-width="0.5"/><path d="M2.6,13.4 L6.2,12 L8.6,14.6 L5,16.1Z" fill="#c88070"/><path d="M12.2,9.6 L15.2,8.5 L17.4,11 L14.4,12.2Z" fill="#c88070"/><ellipse cx="10.4" cy="12.6" rx="2" ry="1.6" fill="#8a9490"/></svg></div>
<div class="a" style="left:41px;top:493px;width:895px;height:28px;background:#1e1e1e"></div>
<div class="a" style="left:41px;top:521px;width:895px;height:2px;background:#2a2a26"></div>
<div class="t " style="left:47px;top:499px;color:#d2d2ca">12</div>
<div class="a" style="left:99px;top:492px;width:16px;height:28px"><svg width="16" height="28" viewBox="0 -0.7 16 28"><defs><linearGradient id="sg" x1="0" x2="1"><stop offset="0" stop-color="#8c8c8c"/><stop offset="0.5" stop-color="#f8f8f8"/><stop offset="1" stop-color="#8c8c8c"/></linearGradient></defs><path d="M4.3,9.3 L6,11.4 L8,10.9 L10,11.4 L11.7,9.3 L13.8,12.5 L12.5,14.3 L7.8,15.8 L3.2,14.3 L2,12.7Z" fill="url(#sg)" stroke="#101010" stroke-width="0.6"/><path d="M1.3,15.4 L7.8,18.6 L14.1,15.2 L14.1,18.2 L7.8,22.3 L1.3,18.2Z" fill="url(#sg)" stroke="#101010" stroke-width="0.6"/></svg></div>
<div class="t " style="left:124.5px;top:499px;color:#d2925c">kaputvcem</div>
<div class="t r " style="right:596px;top:499px;color:#d2d2ca">23 148</div>
<div class="t r " style="right:524px;top:499px;color:#d2d2ca">181</div>
<div class="t r " style="right:434px;top:499px;color:#7ee2da">1 115</div>
<div class="t r " style="right:360px;top:499px;color:#d2d2ca">1 950</div>
<div class="t r " style="right:296px;top:499px;color:#d2d2ca">22</div>
<div class="t r " style="right:225px;top:499px;color:#d2d2ca">50,0%</div>
<div class="t r " style="right:149px;top:499px;color:#d2d2ca">0,50</div>
<div class="t r " style="right:50px;top:499px;color:#d2d2ca">x1</div>
<div class="a" style="left:902px;top:502px;width:12px;height:14px;opacity:0.8"><svg width="12" height="14" viewBox="0 0 14 17"><path d="M7 0.5l6.3 3.5v9l-6.3 3.5-6.3-3.5v-9z" fill="#b89a74" stroke="#c8b090" stroke-width="0.8"/><path d="M2.5 7l4.5 2.5 4.5-2.5M2.5 10l4.5 2.5 4.5-2.5M2.5 13l4.5 2.5 4.5-2.5" fill="none" stroke="#8c6c48" stroke-width="1"/></svg></div>
<div class="t r " style="right:82px;top:499px;color:#d2d2ca">500</div>
<div class="a" style="left:851px;top:493px;width:21px;height:28px"><svg width="21" height="28" viewBox="0 0 21 28"><path d="M0.3,13.3 L5.6,19 L5.6,22.6 L0.3,16.6Z" fill="#8a7c60" stroke="#201a10" stroke-width="0.5"/><path d="M5.6,19 L19.8,13.4 L19.8,17.6 L5.6,22.6Z" fill="#c4bc9c" stroke="#201a10" stroke-width="0.5"/><path d="M0.3,13.3 L14.2,8 L19.8,13.4 L5.6,19Z" fill="#dcd4b4" stroke="#302818" stroke-width="0.5"/><path d="M1.2,15.2 L5.8,20.2 M1.2,16.6 L5.8,21.6" stroke="#40301c" stroke-width="0.5"/><path d="M2.6,13.4 L6.2,12 L8.6,14.6 L5,16.1Z" fill="#c88070"/><path d="M12.2,9.6 L15.2,8.5 L17.4,11 L14.4,12.2Z" fill="#c88070"/><ellipse cx="10.4" cy="12.6" rx="2" ry="1.6" fill="#8a9490"/></svg></div>
<div class="a" style="left:41px;top:523px;width:895px;height:29px;background:#2e2e2e"></div>
<div class="a" style="left:41px;top:552px;width:895px;height:2px;background:#2a2a26"></div>
<div class="t " style="left:47px;top:529px;color:#d2d2ca">13</div>
<div class="a" style="left:99px;top:522px;width:16px;height:28px"><svg width="16" height="28" viewBox="0 0 16 28"><defs><linearGradient id="bg" x1="0" x2="1"><stop offset="0" stop-color="#a09078"/><stop offset="0.45" stop-color="#f0d0b0"/><stop offset="1" stop-color="#a07850"/></linearGradient></defs><path d="M1.1,13.6 L14,10 L14,13.4 L1.1,16.9Z" fill="url(#bg)" stroke="#181008" stroke-width="0.7"/><path d="M1.1,18 L14,14.5 L14,17.9 L1.1,21.2Z" fill="url(#bg)" stroke="#181008" stroke-width="0.7"/></svg></div>
<div class="t " style="left:124.5px;top:529px;color:#d2925c">LoRD_TraVoLTerS</div>
<div class="t r " style="right:596px;top:529px;color:#d2d2ca">24 623</div>
<div class="t r " style="right:524px;top:529px;color:#d2d2ca">138</div>
<div class="t r " style="right:434px;top:529px;color:#7ee2da">1 158</div>
<div class="t r " style="right:360px;top:529px;color:#d2d2ca">1 791</div>
<div class="t r " style="right:296px;top:529px;color:#d2d2ca">15</div>
<div class="t r " style="right:225px;top:529px;color:#d2d2ca">66,7%</div>
<div class="t r " style="right:149px;top:529px;color:#d2d2ca">0,67</div>
<div class="t r " style="right:50px;top:529px;color:#d2d2ca">x1</div>
<div class="a" style="left:902px;top:532px;width:12px;height:14px;opacity:0.8"><svg width="12" height="14" viewBox="0 0 14 17"><path d="M7 0.5l6.3 3.5v9l-6.3 3.5-6.3-3.5v-9z" fill="#b89a74" stroke="#c8b090" stroke-width="0.8"/><path d="M2.5 7l4.5 2.5 4.5-2.5M2.5 10l4.5 2.5 4.5-2.5M2.5 13l4.5 2.5 4.5-2.5" fill="none" stroke="#8c6c48" stroke-width="1"/></svg></div>
<div class="t r " style="right:82px;top:529px;color:#d2d2ca">500</div>
<div class="a" style="left:851px;top:523px;width:21px;height:28px"><svg width="21" height="28" viewBox="0 0 21 28"><path d="M0.3,13.3 L5.6,19 L5.6,22.6 L0.3,16.6Z" fill="#8a7c60" stroke="#201a10" stroke-width="0.5"/><path d="M5.6,19 L19.8,13.4 L19.8,17.6 L5.6,22.6Z" fill="#c4bc9c" stroke="#201a10" stroke-width="0.5"/><path d="M0.3,13.3 L14.2,8 L19.8,13.4 L5.6,19Z" fill="#dcd4b4" stroke="#302818" stroke-width="0.5"/><path d="M1.2,15.2 L5.8,20.2 M1.2,16.6 L5.8,21.6" stroke="#40301c" stroke-width="0.5"/><path d="M2.6,13.4 L6.2,12 L8.6,14.6 L5,16.1Z" fill="#c88070"/><path d="M12.2,9.6 L15.2,8.5 L17.4,11 L14.4,12.2Z" fill="#c88070"/><ellipse cx="10.4" cy="12.6" rx="2" ry="1.6" fill="#8a9490"/></svg></div>
<div class="a" style="left:41px;top:554px;width:895px;height:28px;background:#1e1e1e"></div>
<div class="a" style="left:41px;top:582px;width:895px;height:2px;background:#2a2a26"></div>
<div class="t " style="left:47px;top:560px;color:#d2d2ca">14</div>
<div class="a" style="left:99px;top:553px;width:16px;height:28px"><svg width="16" height="28" viewBox="0 0 16 28"><defs><linearGradient id="bg" x1="0" x2="1"><stop offset="0" stop-color="#a09078"/><stop offset="0.45" stop-color="#f0d0b0"/><stop offset="1" stop-color="#a07850"/></linearGradient></defs><path d="M1.1,13.6 L14,10 L14,13.4 L1.1,16.9Z" fill="url(#bg)" stroke="#181008" stroke-width="0.7"/><path d="M1.1,18 L14,14.5 L14,17.9 L1.1,21.2Z" fill="url(#bg)" stroke="#181008" stroke-width="0.7"/></svg></div>
<div class="t " style="left:124.5px;top:560px;color:#d2925c">CTRELOK105</div>
<div class="t r " style="right:596px;top:560px;color:#d2d2ca">24 658</div>
<div class="t r " style="right:524px;top:560px;color:#d2d2ca">137</div>
<div class="t r " style="right:434px;top:560px;color:#7ee2da">1 159</div>
<div class="t r " style="right:360px;top:560px;color:#d2d2ca">1 274</div>
<div class="t r " style="right:296px;top:560px;color:#d2d2ca">17</div>
<div class="t r " style="right:225px;top:560px;color:#d2d2ca">52,9%</div>
<div class="t r " style="right:149px;top:560px;color:#d2d2ca">0,47</div>
<div class="t r " style="right:50px;top:560px;color:#d2d2ca">x1</div>
<div class="a" style="left:902px;top:563px;width:12px;height:14px;opacity:0.8"><svg width="12" height="14" viewBox="0 0 14 17"><path d="M7 0.5l6.3 3.5v9l-6.3 3.5-6.3-3.5v-9z" fill="#b89a74" stroke="#c8b090" stroke-width="0.8"/><path d="M2.5 7l4.5 2.5 4.5-2.5M2.5 10l4.5 2.5 4.5-2.5M2.5 13l4.5 2.5 4.5-2.5" fill="none" stroke="#8c6c48" stroke-width="1"/></svg></div>
<div class="t r " style="right:82px;top:560px;color:#d2d2ca">500</div>
<div class="a" style="left:851px;top:554px;width:21px;height:28px"><svg width="21" height="28" viewBox="0 0 21 28"><path d="M0.3,13.3 L5.6,19 L5.6,22.6 L0.3,16.6Z" fill="#8a7c60" stroke="#201a10" stroke-width="0.5"/><path d="M5.6,19 L19.8,13.4 L19.8,17.6 L5.6,22.6Z" fill="#c4bc9c" stroke="#201a10" stroke-width="0.5"/><path d="M0.3,13.3 L14.2,8 L19.8,13.4 L5.6,19Z" fill="#dcd4b4" stroke="#302818" stroke-width="0.5"/><path d="M1.2,15.2 L5.8,20.2 M1.2,16.6 L5.8,21.6" stroke="#40301c" stroke-width="0.5"/><path d="M2.6,13.4 L6.2,12 L8.6,14.6 L5,16.1Z" fill="#c88070"/><path d="M12.2,9.6 L15.2,8.5 L17.4,11 L14.4,12.2Z" fill="#c88070"/><ellipse cx="10.4" cy="12.6" rx="2" ry="1.6" fill="#8a9490"/></svg></div>
<div class="a" style="left:41px;top:584px;width:895px;height:29px;background:#0f1640"></div>
<div class="a" style="left:41px;top:613px;width:895px;height:2px;background:#2a2a26"></div>
<div class="t " style="left:47px;top:590px;color:#d2d2ca">15</div>
<div class="a" style="left:99px;top:583px;width:16px;height:28px"><svg width="16" height="28" viewBox="0 -0.7 16 28"><defs><linearGradient id="sg" x1="0" x2="1"><stop offset="0" stop-color="#8c8c8c"/><stop offset="0.5" stop-color="#f8f8f8"/><stop offset="1" stop-color="#8c8c8c"/></linearGradient></defs><path d="M4.3,9.3 L6,11.4 L8,10.9 L10,11.4 L11.7,9.3 L13.8,12.5 L12.5,14.3 L7.8,15.8 L3.2,14.3 L2,12.7Z" fill="url(#sg)" stroke="#101010" stroke-width="0.6"/><path d="M1.3,15.4 L7.8,18.6 L14.1,15.2 L14.1,18.2 L7.8,22.3 L1.3,18.2Z" fill="url(#sg)" stroke="#101010" stroke-width="0.6"/></svg></div>
<div class="t " style="left:124.5px;top:590px;color:#d2925c">Armata_T_14pro</div>
<div class="t r " style="right:596px;top:590px;color:#d2d2ca">29 661</div>
<div class="t r " style="right:524px;top:590px;color:#d2d2ca">41</div>
<div class="t r " style="right:434px;top:590px;color:#7ee2da">1 255</div>
<div class="t r " style="right:360px;top:590px;color:#d2d2ca">3 547</div>
<div class="t r " style="right:296px;top:590px;color:#d2d2ca">4</div>
<div class="t r " style="right:225px;top:590px;color:#d2d2ca">50,0%</div>
<div class="t r " style="right:149px;top:590px;color:#d2d2ca">0,75</div>
<div class="t r " style="right:50px;top:590px;color:#d2d2ca">250</div>
<div class="a" style="left:885px;top:584px;width:21px;height:28px"><svg width="21" height="28" viewBox="0 0 21 28"><path d="M0.3,13.3 L5.6,19 L5.6,22.6 L0.3,16.6Z" fill="#8a7c60" stroke="#201a10" stroke-width="0.5"/><path d="M5.6,19 L19.8,13.4 L19.8,17.6 L5.6,22.6Z" fill="#c4bc9c" stroke="#201a10" stroke-width="0.5"/><path d="M0.3,13.3 L14.2,8 L19.8,13.4 L5.6,19Z" fill="#dcd4b4" stroke="#302818" stroke-width="0.5"/><path d="M1.2,15.2 L5.8,20.2 M1.2,16.6 L5.8,21.6" stroke="#40301c" stroke-width="0.5"/><path d="M2.6,13.4 L6.2,12 L8.6,14.6 L5,16.1Z" fill="#c88070"/><path d="M12.2,9.6 L15.2,8.5 L17.4,11 L14.4,12.2Z" fill="#c88070"/><ellipse cx="10.4" cy="12.6" rx="2" ry="1.6" fill="#8a9490"/></svg></div>
<div class="a" style="left:41px;top:615px;width:895px;height:28px;background:#1a2827"></div>
<div class="a" style="left:41px;top:643px;width:895px;height:2px;background:#2a2a26"></div>
<div class="t " style="left:47px;top:621px;color:#d2d2ca">16</div>
<div class="a" style="left:99px;top:614px;width:16px;height:28px"><svg width="16" height="28" viewBox="0 0 16 28"><defs><linearGradient id="bg" x1="0" x2="1"><stop offset="0" stop-color="#a09078"/><stop offset="0.45" stop-color="#f0d0b0"/><stop offset="1" stop-color="#a07850"/></linearGradient></defs><path d="M1.1,13.6 L14,10 L14,13.4 L1.1,16.9Z" fill="url(#bg)" stroke="#181008" stroke-width="0.7"/><path d="M1.1,18 L14,14.5 L14,17.9 L1.1,21.2Z" fill="url(#bg)" stroke="#181008" stroke-width="0.7"/></svg></div>
<div class="t " style="left:124.5px;top:621px;color:#d2925c">GreisonXant</div>
<div class="t r " style="right:434px;top:621px;color:#7ee2da">1 296</div>
<div class="a" style="left:41px;top:645px;width:895px;height:28px;background:#0f1516"></div>
<div class="a" style="left:41px;top:673px;width:895px;height:2px;background:#2a2a26"></div>
<div class="t " style="left:47px;top:651px;color:#d2d2ca">17</div>
<div class="a" style="left:99px;top:644px;width:16px;height:28px"><svg width="16" height="28" viewBox="0 0 16 28"><defs><linearGradient id="bg" x1="0" x2="1"><stop offset="0" stop-color="#a09078"/><stop offset="0.45" stop-color="#f0d0b0"/><stop offset="1" stop-color="#a07850"/></linearGradient></defs><path d="M1.1,13.6 L14,10 L14,13.4 L1.1,16.9Z" fill="url(#bg)" stroke="#181008" stroke-width="0.7"/><path d="M1.1,18 L14,14.5 L14,17.9 L1.1,21.2Z" fill="url(#bg)" stroke="#181008" stroke-width="0.7"/></svg></div>
<div class="t " style="left:124.5px;top:651px;color:#d2925c">gettx</div>
<div class="t r " style="right:434px;top:651px;color:#7ee2da">1 296</div>
<div class="a" style="left:41px;top:675px;width:895px;height:29px;background:#1a2827"></div>
<div class="a" style="left:41px;top:704px;width:895px;height:2px;background:#2a2a26"></div>
<div class="t " style="left:47px;top:681px;color:#d2d2ca">18</div>
<div class="a" style="left:99px;top:674px;width:16px;height:28px"><svg width="16" height="28" viewBox="0 -1 16 28"><defs><linearGradient id="og" x1="0" x2="1"><stop offset="0" stop-color="#a87038"/><stop offset="0.5" stop-color="#fae494"/><stop offset="1" stop-color="#a87038"/></linearGradient></defs><path d="M2.9,8.6 L10.6,15.6 M12.2,8.6 L4.6,15.6" stroke="#20180a" stroke-width="3"/><path d="M2.9,8.6 L10.6,15.6" stroke="#ecd48e" stroke-width="1.8"/><path d="M12.2,8.6 L4.6,15.6" stroke="#d4b070" stroke-width="1.8"/><path d="M1.8,16 L7.6,18.8 L13.8,15.8 L13.8,18.6 L7.6,22.2 L1.8,18.8Z" fill="url(#og)" stroke="#2a1a08" stroke-width="0.6"/></svg></div>
<div class="t " style="left:124.5px;top:681px;color:#d2925c">KPS88</div>
<div class="t r " style="right:434px;top:681px;color:#7ee2da">1 296</div>
<div class="a" style="left:41px;top:96px;width:2px;height:61px;background:#313131"></div>
<div class="a" style="left:41px;top:157px;width:2px;height:531px;background:#2a2a26"></div>
<div class="a" style="left:85px;top:96px;width:2px;height:61px;background:#313131"></div>
<div class="a" style="left:85px;top:157px;width:2px;height:531px;background:#2a2a26"></div>
<div class="a" style="left:119px;top:96px;width:2px;height:61px;background:#313131"></div>
<div class="a" style="left:119px;top:157px;width:2px;height:531px;background:#2a2a26"></div>
<div class="a" style="left:299px;top:96px;width:2px;height:61px;background:#313131"></div>
<div class="a" style="left:299px;top:157px;width:2px;height:531px;background:#2a2a26"></div>
<div class="a" style="left:388px;top:96px;width:2px;height:61px;background:#313131"></div>
<div class="a" style="left:388px;top:157px;width:2px;height:531px;background:#2a2a26"></div>
<div class="a" style="left:460px;top:96px;width:2px;height:61px;background:#313131"></div>
<div class="a" style="left:460px;top:157px;width:2px;height:531px;background:#2a2a26"></div>
<div class="a" style="left:550px;top:96px;width:2px;height:61px;background:#313131"></div>
<div class="a" style="left:550px;top:157px;width:2px;height:531px;background:#2a2a26"></div>
<div class="a" style="left:624px;top:128px;width:2px;height:29px;background:#313131"></div>
<div class="a" style="left:624px;top:157px;width:2px;height:531px;background:#2a2a26"></div>
<div class="a" style="left:688px;top:128px;width:2px;height:29px;background:#313131"></div>
<div class="a" style="left:688px;top:157px;width:2px;height:531px;background:#2a2a26"></div>
<div class="a" style="left:759px;top:128px;width:2px;height:29px;background:#313131"></div>
<div class="a" style="left:759px;top:157px;width:2px;height:531px;background:#2a2a26"></div>
<div class="a" style="left:835px;top:96px;width:2px;height:61px;background:#313131"></div>
<div class="a" style="left:835px;top:157px;width:2px;height:531px;background:#2a2a26"></div>
<div class="a" style="left:934px;top:96px;width:2px;height:61px;background:#313131"></div>
<div class="a" style="left:934px;top:157px;width:2px;height:531px;background:#2a2a26"></div>
<div class="t b" style="left:47px;top:135px;">№</div>
<div class="t b" style="left:125px;top:135px;">Имя</div>
<div class="t b" style="left:305px;top:135px;">Позиция</div>
<div class="t b" style="left:394px;top:135px;">Очков</div>
<div class="t b" style="left:465px;top:135px;">Δ до 7.5k</div>
<div class="t b" style="left:555px;top:135px;">Дамаг</div>
<div class="t b" style="left:630px;top:135px;">Боёв</div>
<div class="t b" style="left:694px;top:135px;">Побед</div>
<div class="t b" style="left:765px;top:135px;">Фрагов</div>
<div class="t b" style="left:848px;top:135px;">Награда</div>
<svg class="sort" viewBox="0 0 9 14" style="left:105.0px;top:119.5px"><path d="M4.5 0L9 6H0z" fill="#333"/><path d="M0 7h9L4.5 13.5z" fill="#333"/></svg>
<svg class="sort" viewBox="0 0 9 14" style="left:285.0px;top:119.5px"><path d="M4.5 0L9 6H0z" fill="#333"/><path d="M0 7h9L4.5 13.5z" fill="#333"/></svg>
<svg class="sort" viewBox="0 0 9 14" style="left:446.0px;top:119.5px"><path d="M4.5 0L9 6H0z" fill="#333"/><path d="M0 7h9L4.5 13.5z" fill="#333"/></svg>
<svg class="sort" viewBox="0 0 9 14" style="left:920.0px;top:119.5px"><path d="M4.5 0L9 6H0z" fill="#333"/><path d="M0 7h9L4.5 13.5z" fill="#333"/></svg>
<svg class="sort" viewBox="0 0 9 14" style="left:610.0px;top:136.5px"><path d="M4.5 0L9 6H0z" fill="#333"/><path d="M0 7h9L4.5 13.5z" fill="#333"/></svg>
<svg class="sort" viewBox="0 0 9 14" style="left:674.0px;top:136.5px"><path d="M4.5 0L9 6H0z" fill="#333"/><path d="M0 7h9L4.5 13.5z" fill="#333"/></svg>
<svg class="sort" viewBox="0 0 9 14" style="left:745.0px;top:136.5px"><path d="M4.5 0L9 6H0z" fill="#333"/><path d="M0 7h9L4.5 13.5z" fill="#333"/></svg>
<svg class="sort" viewBox="0 0 9 14" style="left:821.0px;top:136.5px"><path d="M4.5 0L9 6H0z" fill="#333"/><path d="M0 7h9L4.5 13.5z" fill="#333"/></svg>
<svg class="sort" viewBox="0 0 9 14" style="left:374px;top:119px"><path d="M4.5 0L9 7H0z" fill="#a8a048"/></svg>
<div class="a" style="left:622px;top:101px;width:106px;height:22px;background:#d48c50;border-radius:4px"></div>
<div class="t b" style="left:628px;top:104px;font-size:11px;color:#1c1208">Во время ивента</div>
<div class="t " style="left:732px;top:105px;font-size:13px;color:#cfcfcf">* **</div>
</body></html>
